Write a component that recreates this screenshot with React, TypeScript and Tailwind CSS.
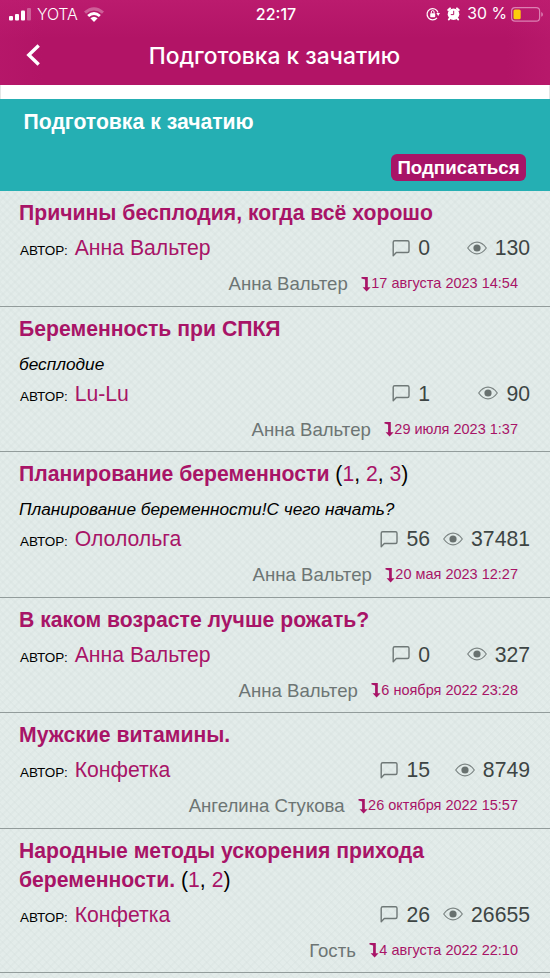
interface Topic {
    id: number;
    title: string;
    pages?: number[];
    subtitle?: string;
    author: string;
    comments: number;
    views: number;
    lastUser: string;
    lastDate: string;
}

const topics: Topic[] = [
    { id: 1, title: 'Причины бесплодия, когда всё хорошо', author: 'Анна Вальтер', comments: 0, views: 130, lastUser: 'Анна Вальтер', lastDate: '17 августа 2023 14:54' },
    { id: 2, title: 'Беременность при СПКЯ', subtitle: 'бесплодие', author: 'Lu-Lu', comments: 1, views: 90, lastUser: 'Анна Вальтер', lastDate: '29 июля 2023 1:37' },
    { id: 3, title: 'Планирование беременности', pages: [1, 2, 3], subtitle: 'Планирование беременности!С чего начать?', author: 'Олололь' + 'га', comments: 56, views: 37481, lastUser: 'Анна Вальтер', lastDate: '20 мая 2023 12:27' },
    { id: 4, title: 'В каком возрасте лучше рожать?', author: 'Анна Вальтер', comments: 0, views: 327, lastUser: 'Анна Вальтер', lastDate: '6 ноября 2022 23:28' },
    { id: 5, title: 'Мужские витамины.', author: 'Конфетка', comments: 15, views: 8749, lastUser: 'Ангелина Стукова', lastDate: '26 октября 2022 15:57' },
    { id: 6, title: 'Народные методы ускорения прихода беременности.', pages: [1, 2], author: 'Конфетка', comments: 26, views: 26655, lastUser: 'Гость', lastDate: '4 августа 2022 22:10' },
];

const CommentIcon = () => (
    <svg className="w-[18px] h-[18px] shrink-0" viewBox="0 0 18 18" fill="none" stroke="#6f7877" strokeWidth="1.4" strokeLinejoin="round">
        <path d="M1.2 16.8V3.2Q1.2 1.7 2.7 1.7H15.5Q17 1.7 17 3.2V12Q17 13.5 15.5 13.5H4.3Z" />
    </svg>
);

const EyeIcon = () => (
    <svg className="w-5 h-[14px] shrink-0" viewBox="0 0 20 14" fill="none" stroke="#7b8483" strokeWidth="1.2">
        <path d="M.7 7Q4.8 1.2 10 1.2T19.3 7Q15.2 12.8 10 12.8T.7 7Z" />
        <circle cx="10" cy="7" r="3.6" fill="#68716f" stroke="none" />
    </svg>
);

const DownArrow = () => (
    <svg className="w-[10px] h-[15px] shrink-0" viewBox="0 0 10 15" fill="#a81467">
        <path d="M.5 0H6.8V10.2H9.6L5.6 14.6L1.6 10.2H4.1V2.4L.5 1.6Z" />
    </svg>
);

const StatusBar = () => (
    <div className="h-7 flex items-center justify-between pl-[9px] pr-[7px] text-[16px]">
        <div className="flex items-center flex-1">
            <svg className="w-[23px] h-[13px]" viewBox="0 0 23 13" fill="#fff">
                <rect x="0" y="8" width="4" height="4.5" rx="1" />
                <rect x="6" y="6" width="4" height="6.5" rx="1" />
                <rect x="12" y="2.5" width="4" height="10" rx="1" />
                <rect x="18" y="0" width="4" height="12.5" rx="1" opacity=".3" />
            </svg>
            <span className="ml-[5px] tracking-[-0.2px] font-light">YOTA</span>
            <svg className="w-5 h-[15px] ml-[6px]" viewBox="0 0 20 15">
                <path d="M0 4.6Q10-4 20 4.6L18 6.8Q10 0 2 6.8Z" fill="#fff" opacity=".3" />
                <path d="M3.2 8Q10 2 16.8 8L14.9 10Q10 5.8 5.1 10Z" fill="#fff" />
                <path d="M6.4 11.3Q10 8.3 13.6 11.3L10 15Z" fill="#fff" />
            </svg>
        </div>
        <span className="font-medium">22:17</span>
        <div className="flex items-center justify-end flex-1">
            <svg className="w-[14px] h-[14px]" viewBox="0 0 14 14" fill="none" stroke="#fff" strokeWidth="1.2">
                <path d="M11 10.8A5.6 5.6 0 1 1 12 5.5" />
                <path d="M10.3 6H14L12.2 9Z" fill="#fff" stroke="none" />
                <rect x="4.2" y="6.2" width="5" height="4" rx=".6" fill="#fff" stroke="none" />
                <path d="M5.3 6.4V5A1.4 1.4 0 0 1 8.1 5V6.4" strokeWidth="1" />
            </svg>
            <svg className="w-[13px] h-[14px] ml-[7px]" viewBox="0 0 13 14" fill="none">
                <circle cx="6.5" cy="7.2" r="5.8" fill="#fff" />
                <path d="M1.3 3L3 1.4M11.7 3L10 1.4M2.5 11.7L1.9 12.5M10.5 11.7L11.1 12.5" stroke="#fff" strokeWidth="2" strokeLinecap="round" />
                <path d="M6.7 3.8V7.6H3.8" stroke="#b51668" strokeWidth="1" />
            </svg>
            <span className="ml-[7px] text-[15.8px]">30 %</span>
            <svg className="w-8 h-[15px] ml-1" viewBox="0 0 32 15" fill="none">
                <rect x=".6" y=".6" width="28" height="13.6" rx="3.4" stroke="#dc80b3" strokeWidth="1.2" />
                <rect x="2.5" y="2.5" width="7.2" height="9.8" rx="1.6" fill="#fccc0a" />
                <path d="M30.2 5Q32 5.6 32 7.4T30.2 9.8Z" fill="#d878ad" />
            </svg>
        </div>
    </div>
);

const TopicRow = ({ topic }: { topic: Topic }) => (
    <article className="pt-[7px] pb-[5.5px] pl-[19px] border-b border-[#929c9b]">
        <h2 className="text-[21.2px] leading-[29px] pr-20 mb-px">
            <a className="font-bold text-[#a81467]">{topic.title}</a>
            {topic.pages && (
                <span className="whitespace-nowrap text-black">
                    {' ('}
                    {topic.pages.map((page, i) => (
                        <span key={page}>
                            {i > 0 && ', '}
                            <a className="text-[#a81467]">{page}</a>
                        </span>
                    ))}
                    )
                </span>
            )}
        </h2>
        {topic.subtitle && <p className="h-[30px] pt-2.5 text-[17.25px] leading-5 italic text-black">{topic.subtitle}</p>}
        <div className="h-10 flex items-center justify-between pr-5">
            <div className="flex items-baseline pl-px">
                <span className="text-[13.5px] text-black">АВТОР:</span>
                <a className="ml-[7px] text-[21.2px] text-[#a81467]">{topic.author}</a>
            </div>
            <div className="flex items-center text-[21.2px] text-[#3d4544]">
                <CommentIcon />
                <span className="ml-2">{topic.comments}</span>
                <div className="min-w-[100px] flex items-center justify-end">
                    <EyeIcon />
                    <span className="ml-2">{topic.views}</span>
                </div>
            </div>
        </div>
        <div className="h-8 flex items-center justify-end pr-8">
            <span className="text-[18.6px] text-[#6d7574]">{topic.lastUser}</span>
            <span className="ml-[13.5px] flex items-center text-[14.5px] text-[#a81467]">
                <DownArrow />
                {topic.lastDate}
            </span>
        </div>
    </article>
);

export default function App() {
    return (
        <div className="w-[550px] h-[978px] overflow-hidden bg-[#e3ecea] font-['Liberation_Sans',Arial,sans-serif]">
            <header className="h-[85px] bg-[linear-gradient(to_right,#c01f7240,transparent_8%_92%,#c01f7260),linear-gradient(#bb1b6e,#b21466_45%)] text-white font-['Inter',sans-serif]">
                <StatusBar />
                <div className="h-[57px] grid grid-cols-[60px_1fr_60px] items-center">
                    <svg className="w-[14px] h-[22px] ml-[26px] mb-1" viewBox="0 0 14 22" fill="none" stroke="#fff" strokeWidth="3.4">
                        <path d="M12.7 1.5L2.8 11L12.7 20.5" />
                    </svg>
                    <h1 className="-ml-px text-center whitespace-nowrap text-[22.8px] font-medium">Подготовка к зачатию</h1>
                </div>
            </header>
            <div className="h-[14px] bg-white border-x border-[#e3e6e6]" />
            <section className="h-[92px] bg-[#25afb3] text-white font-bold flex flex-col justify-between pt-[9px] pb-2.5 pl-[23.5px] pr-6">
                <h2 className="text-[21.2px] leading-7">Подготовка к зачатию</h2>
                <button className="self-end w-[135px] h-[27px] rounded-md bg-[#a81467] text-[18.7px] leading-[27px]">Подписаться</button>
            </section>
            <main className="bg-[repeating-linear-gradient(45deg,#d2dddb40_0_2px,transparent_2px_5.66px),repeating-linear-gradient(-45deg,#d2dddb40_0_2px,transparent_2px_5.66px)]">
                {topics.map(topic => (
                    <TopicRow key={topic.id} topic={topic} />
                ))}
                <div className="h-4" />
            </main>
        </div>
    );
}
